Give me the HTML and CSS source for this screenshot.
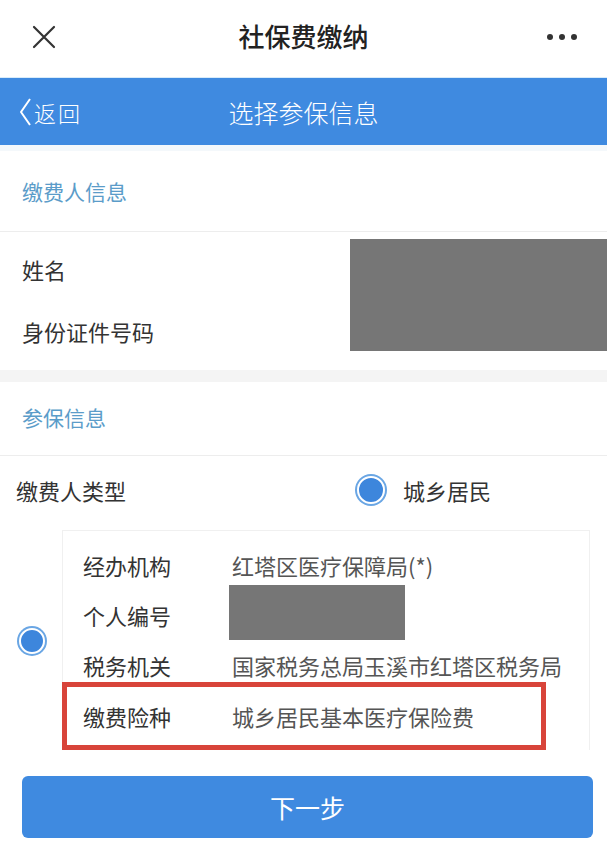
FILE: index.html
```html
<!DOCTYPE html>
<html lang="zh-CN">
<head>
  <meta charset="UTF-8" />
  <meta name="viewport" content="width=device-width, initial-scale=1.0"/>
  <title>社保费缴纳</title>
  <link rel="stylesheet" href="styles.css">
</head>
<body>
  <div class="topbar">
    <svg class="close-icon" width="24" height="24" viewBox="0 0 24 24">
      <path d="M2 2 L22 22 M22 2 L2 22" stroke="#333" stroke-width="2.2" fill="none" stroke-linecap="round"/>
    </svg>
    <div class="topbar-title">社保费缴纳</div>
    <div class="more"><span></span><span></span><span></span></div>
  </div>

  <div class="navbar">
    <div class="back">
      <svg width="14" height="30" viewBox="0 0 14 30">
        <path d="M12 2 L3 15 L12 28" stroke="#fff" stroke-width="2" fill="none" stroke-linejoin="round"/>
      </svg>
      <span>返回</span>
    </div>
    <div class="navbar-title">选择参保信息</div>
  </div>

  <div class="thin-band"></div>

  <div class="section-head">缴费人信息</div>
  <div class="payer">
    <div class="payer-labels">
      <div class="payer-row">姓名</div>
      <div class="payer-row">身份证件号码</div>
    </div>
    <div class="mask mask-payer"></div>
  </div>

  <div class="band"></div>

  <div class="section-head section-head-short">参保信息</div>
  <div class="type-row">
    <div class="type-label">缴费人类型</div>
    <div class="radio radio-big"></div>
    <div class="type-value">城乡居民</div>
  </div>

  <div class="choice">
    <div class="choice-radio">
      <div class="radio"></div>
    </div>
    <div class="card">
      <div class="card-row">
        <div class="card-label">经办机构</div>
        <div class="card-value">红塔区医疗保障局(*)</div>
      </div>
      <div class="card-row">
        <div class="card-label">个人编号</div>
        <div class="mask mask-number"></div>
      </div>
      <div class="card-row">
        <div class="card-label">税务机关</div>
        <div class="card-value">国家税务总局玉溪市红塔区税务局</div>
      </div>
      <div class="card-row card-row-marked">
        <div class="card-label">缴费险种</div>
        <div class="card-value">城乡居民基本医疗保险费</div>
      </div>
    </div>
  </div>

  <div class="actions">
    <button class="next-btn">下一步</button>
  </div>
</body>
</html>
```

FILE: styles.css
```css
body {
  margin: 0;
  font-family: "Noto Sans CJK SC", "Noto Sans", sans-serif;
  background: #fff;
  color: #333;
  width: 607px;
}
.topbar {
  height: 78px;
  display: flex;
  align-items: center;
  justify-content: space-between;
  padding: 0 30px 0 32px;
  box-sizing: border-box;
  border-bottom: 1px solid #d9ecfa;
}
.close-icon {
  margin-top: -4px;
}
.topbar-title {
  font-size: 26px;
  font-weight: 500;
  color: #222;
  margin-left: 4px;
  margin-top: -6px;
}
.more {
  display: flex;
  gap: 6px;
  margin-top: -4px;
}
.more span {
  width: 6px;
  height: 6px;
  border-radius: 50%;
  background: #333;
}
.navbar {
  height: 67px;
  background: #3f8ae0;
  color: #fff;
  display: flex;
  align-items: center;
}
.back {
  display: flex;
  align-items: center;
  padding-left: 18px;
  font-size: 22px;
  font-weight: 300;
  gap: 2px;
  width: 82px;
}
.back span {
  letter-spacing: 2px;
}
.navbar-title {
  flex: 1;
  text-align: center;
  font-size: 25px;
  font-weight: 300;
  margin-right: 100px;
}
.thin-band {
  height: 6px;
  background: #f4f8fb;
}
.section-head {
  height: 80px;
  line-height: 80px;
  padding-left: 22px;
  font-size: 21px;
  color: #5b9cc9;
  border-bottom: 1px solid #ededed;
}
.section-head-short {
  height: 73px;
  line-height: 70px;
}
.payer {
  display: flex;
  justify-content: space-between;
  height: 138px;
}
.payer-labels {
  padding: 6px 0 0 22px;
  font-size: 22px;
}
.payer-row {
  height: 62px;
  line-height: 62px;
}
.mask {
  background: #767676;
}
.mask-payer {
  width: 257px;
  height: 112px;
  margin-top: 7px;
}
.band {
  height: 12px;
  background: #f4f4f4;
}
.type-row {
  height: 68px;
  display: flex;
  align-items: center;
  font-size: 22px;
}
.type-label {
  width: 341px;
  padding-left: 16px;
}
.type-value {
  margin-left: 18px;
}
.radio {
  width: 22px;
  height: 22px;
  border-radius: 50%;
  background: #3d86dc;
  border: 2px solid #fff;
  box-shadow: 0 0 0 2px #6aa6e4;
}
.radio-big {
  width: 24px;
  height: 24px;
}
.choice {
  display: flex;
  align-items: center;
  margin-top: 6px;
}
.choice-radio {
  width: 62px;
  padding-left: 19px;
  box-sizing: border-box;
  margin-top: 2px;
}
.card {
  width: 528px;
  border: 1px solid #f0f0f0;
  border-bottom: none;
  padding-top: 9px;
  box-sizing: border-box;
}
.card-row {
  height: 50px;
  display: flex;
  align-items: center;
  padding-left: 20px;
  font-size: 22px;
}
.card-label {
  width: 149px;
  color: #333;
}
.card-value {
  color: #555;
  white-space: nowrap;
}
.mask-number {
  width: 176px;
  height: 55px;
  margin-top: -6px;
  margin-left: -3px;
}
.card-row-marked {
  width: 484px;
  height: 68px;
  margin-top: -8px;
  margin-left: -1px;
  border: 5px solid #d8443a;
  padding-left: 16px;
  box-sizing: border-box;
}
.actions {
  padding: 26px 14px 0 22px;
}
.next-btn {
  width: 571px;
  height: 62px;
  border: none;
  border-radius: 6px;
  background: #3f8ae0;
  color: #fff;
  font-family: inherit;
  font-size: 25px;
}
```
